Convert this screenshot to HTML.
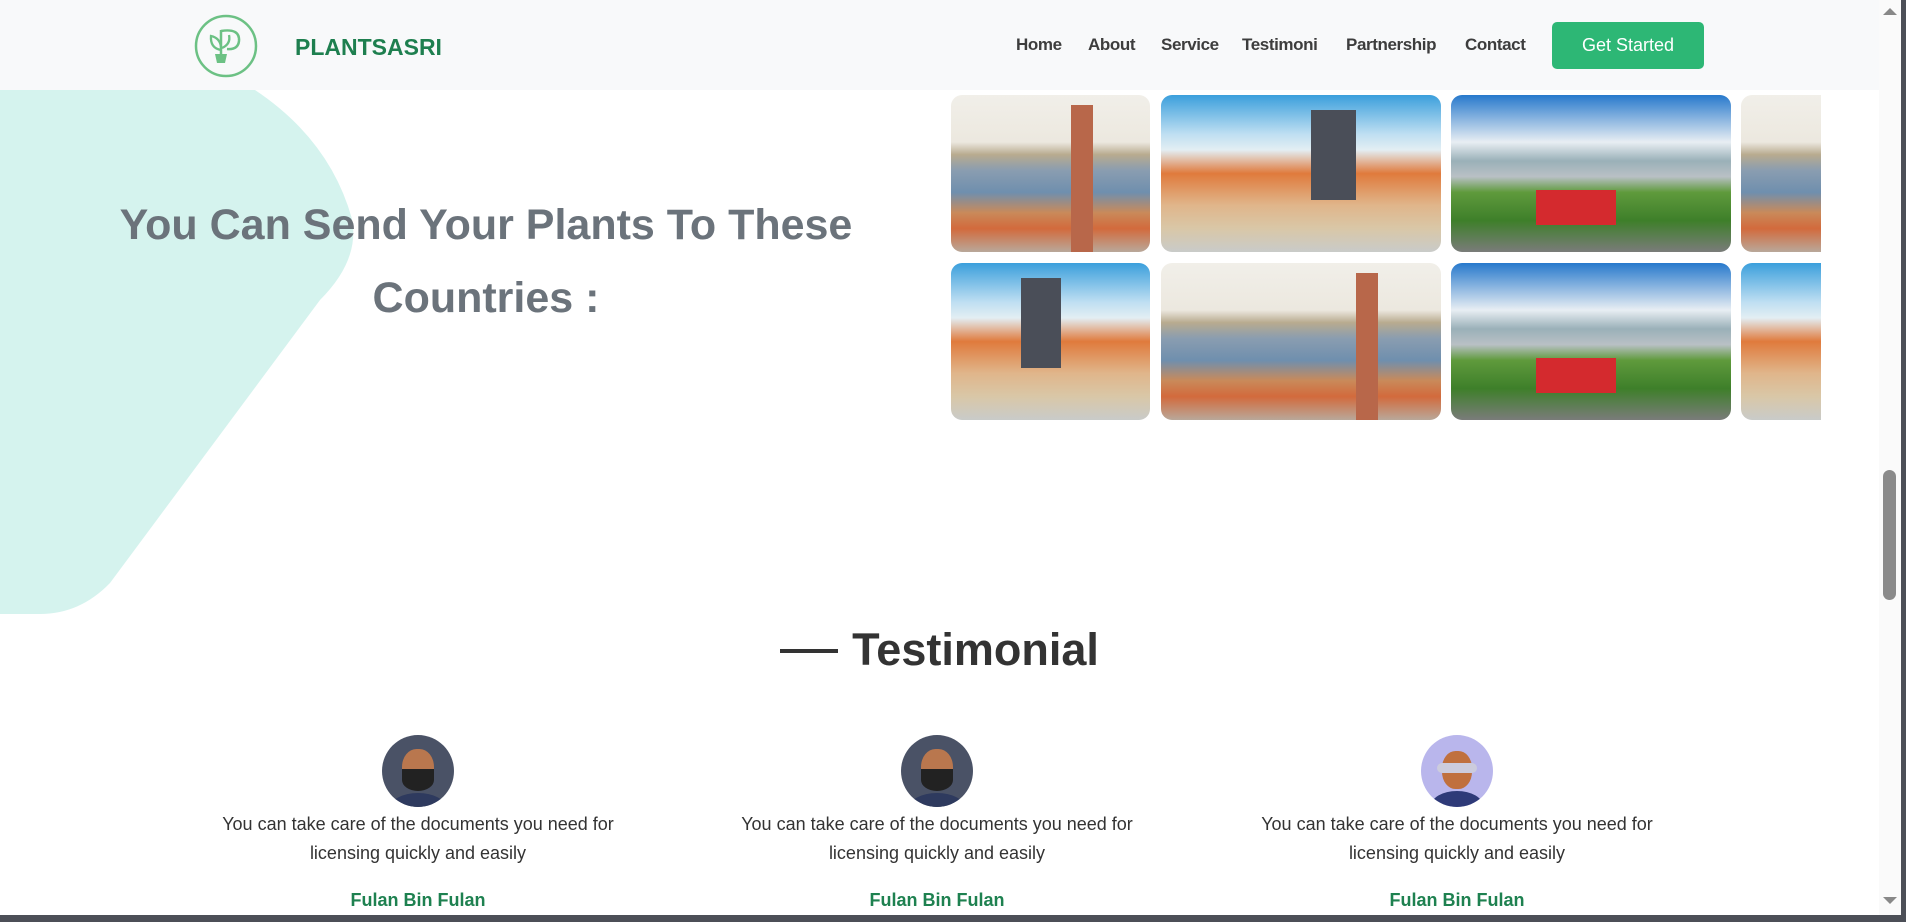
<!DOCTYPE html>
<html><head><meta charset="utf-8"><style>
*{margin:0;padding:0;box-sizing:border-box}
body{width:1906px;height:922px;overflow:hidden;background:#fff;font-family:"Liberation Sans",sans-serif;position:relative}
.hdr{position:absolute;left:0;top:0;width:1879px;height:90px;background:#f8f9fa;z-index:2}
.nav{position:absolute;top:35px;font-size:17px;font-weight:600;color:#3d3d3d;letter-spacing:-0.4px}
.btn{position:absolute;left:1552px;top:22px;width:152px;height:47px;background:#2db775;border-radius:5px;color:#fff;font-size:18px;text-align:center;line-height:47px}
.blob{position:absolute;left:0;top:0;z-index:0}
h1{position:absolute;left:86px;width:800px;top:189px;text-align:center;font-size:43px;line-height:73px;font-weight:600;color:#6b737b;z-index:1}
.img{position:absolute;border-radius:11px;overflow:hidden}
.riga{background:linear-gradient(180deg,#f1efe9 0%,#ece8df 30%,#b8ab8f 38%,#8a9db0 48%,#6f8fae 62%,#c98a5a 75%,#d26a3c 85%,#b9a89a 100%)}
.prague{background:linear-gradient(180deg,#3b9fdc 0%,#bfdff2 25%,#e3eef3 35%,#e07a3c 50%,#e0b58a 70%,#d9c7a7 85%,#c9cbc9 100%)}
.well{background:linear-gradient(180deg,#2779cc 0%,#e8eef3 30%,#9ab0b8 42%,#b9c0c5 52%,#5f9a3c 62%,#3e7f2a 80%,#7a7c7a 100%)}
.tram{position:absolute;background:#d42a2e}
.tw{position:absolute;background:#6a4a3a}
.test{position:absolute;top:624px;left:0;width:1879px;text-align:center;font-size:45px;font-weight:600;color:#333}
.card{position:absolute;top:735px;width:440px;text-align:center}
.av{width:72px;height:72px;border-radius:50%;margin:0 auto;position:relative;overflow:hidden}
.card p{margin-top:3px;font-size:18px;line-height:29px;color:#333}
.card b{display:block;margin-top:22px;font-size:18px;color:#1e8150}
.sb{position:absolute;left:1879px;top:0;width:22px;height:915px;background:#fafafa}
</style></head><body>
<svg class="blob" width="360" height="620"><path d="M0 90 H255 Q330 140 352 219 Q360 260 320 300 L110 583 Q80 614 40 614 H0 Z" fill="#d5f3ee"/></svg>
<div class="hdr">
<svg style="position:absolute;left:194px;top:14px" width="64" height="64" viewBox="0 0 64 64"><circle cx="32" cy="32" r="30" fill="none" stroke="#6cc184" stroke-width="2.5"/><path d="M27 16 V48 M27 17 Q46 14 45 27 Q44 36 33 35" fill="none" stroke="#6cc184" stroke-width="2.5"/><path d="M27 36 Q16 34 17 22 Q26 24 27 33 M28 34 Q37 30 35 21" fill="none" stroke="#6cc184" stroke-width="2.3"/><path d="M21 40 H33 L31 49 H23 Z" fill="#6cc184"/></svg>
<div style="position:absolute;left:295px;top:34px;font-size:23px;font-weight:700;color:#1e7f4f">PLANTSASRI</div>
<div class="nav" style="left:1016px">Home</div>
<div class="nav" style="left:1088px">About</div>
<div class="nav" style="left:1161px">Service</div>
<div class="nav" style="left:1242px">Testimoni</div>
<div class="nav" style="left:1346px">Partnership</div>
<div class="nav" style="left:1465px">Contact</div>
<div class="btn">Get Started</div>
</div>
<h1>You Can Send Your Plants To These Countries :</h1>
<div style="position:absolute;left:951px;top:95px;width:870px;height:330px;overflow:hidden">
<div class="img riga" style="left:0;top:0;width:199px;height:157px"><div class="tw" style="left:120px;top:10px;width:22px;height:147px;background:#b8674a"></div></div>
<div class="img prague" style="left:210px;top:0;width:280px;height:157px"><div class="tw" style="left:150px;top:15px;width:45px;height:90px;background:#4a4e58"></div></div>
<div class="img well" style="left:500px;top:0;width:280px;height:157px"><div class="tram" style="left:85px;top:95px;width:80px;height:35px"></div></div>
<div class="img riga" style="left:790px;top:0;width:90px;height:157px"></div>
<div class="img prague" style="left:0;top:168px;width:199px;height:157px"><div class="tw" style="left:70px;top:15px;width:40px;height:90px;background:#4a4e58"></div></div>
<div class="img riga" style="left:210px;top:168px;width:280px;height:157px"><div class="tw" style="left:195px;top:10px;width:22px;height:147px;background:#b8674a"></div></div>
<div class="img well" style="left:500px;top:168px;width:280px;height:157px"><div class="tram" style="left:85px;top:95px;width:80px;height:35px"></div></div>
<div class="img prague" style="left:790px;top:168px;width:90px;height:157px"></div>
</div>
<div class="test"><span style="display:inline-block;width:58px;height:4px;background:#333;vertical-align:middle;margin-right:14px;position:relative;top:-2px"></span>Testimonial</div>
<div class="card" style="left:198px"><div class="av" style="background:#4a5266"><div style="position:absolute;left:20px;top:14px;width:32px;height:40px;border-radius:45%;background:#b9774e"></div><div style="position:absolute;left:20px;top:34px;width:32px;height:22px;border-radius:0 0 50% 50%;background:#222"></div><div style="position:absolute;left:8px;top:58px;width:56px;height:30px;border-radius:50%;background:#2e3a5e"></div></div><p>You can take care of the documents you need for<br>licensing quickly and easily</p><b>Fulan Bin Fulan</b></div>
<div class="card" style="left:717px"><div class="av" style="background:#4a5266"><div style="position:absolute;left:20px;top:14px;width:32px;height:40px;border-radius:45%;background:#b9774e"></div><div style="position:absolute;left:20px;top:34px;width:32px;height:22px;border-radius:0 0 50% 50%;background:#222"></div><div style="position:absolute;left:8px;top:58px;width:56px;height:30px;border-radius:50%;background:#2e3a5e"></div></div><p>You can take care of the documents you need for<br>licensing quickly and easily</p><b>Fulan Bin Fulan</b></div>
<div class="card" style="left:1237px"><div class="av" style="background:#b9b6ec"><div style="position:absolute;left:21px;top:16px;width:30px;height:38px;border-radius:45%;background:#c0703e"></div><div style="position:absolute;left:16px;top:28px;width:40px;height:10px;border-radius:5px;background:#ccd"></div><div style="position:absolute;left:10px;top:56px;width:52px;height:30px;border-radius:50%;background:#2e3a78"></div></div><p>You can take care of the documents you need for<br>licensing quickly and easily</p><b>Fulan Bin Fulan</b></div>
<div class="sb"><div style="position:absolute;left:4px;top:470px;width:13px;height:130px;border-radius:7px;background:#8a8a8a"></div><div style="position:absolute;left:4px;top:8px;border:7px solid transparent;border-bottom:7px solid #888;border-top:0"></div><div style="position:absolute;left:4px;top:897px;border:7px solid transparent;border-top:7px solid #888;border-bottom:0"></div></div>
<div style="position:absolute;left:1901px;top:0;width:5px;height:922px;background:#4c4f57"></div>
<div style="position:absolute;left:0;top:915px;width:1906px;height:7px;background:#4c4f57"></div>
</body></html>
